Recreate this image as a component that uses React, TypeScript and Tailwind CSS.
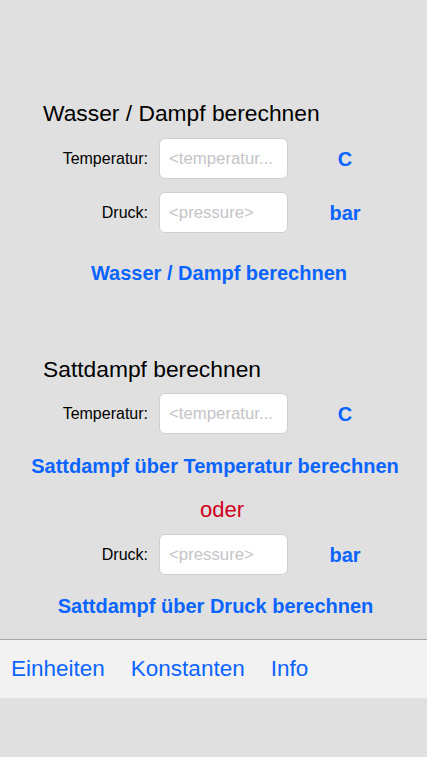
import React from "react";

const font = { fontFamily: '"Liberation Sans", Arial, sans-serif' };

const InputRow = ({
  label,
  placeholder,
  unit,
  className = "",
}: {
  label: string;
  placeholder: string;
  unit: string;
  className?: string;
}) => (
  <div className={`flex items-center ${className}`}>
    <div className="w-[148px] text-right text-[16px] text-black">{label}</div>
    <input
      readOnly
      placeholder={placeholder}
      className="ml-[11px] h-[41px] w-[129px] rounded-[6px] border border-[#cfcfd3] bg-white px-[9px] text-[16.8px] text-black outline-none placeholder:text-[#c4c4c8]"
      style={font}
    />
    <div className="w-[114px] text-center text-[20px] font-bold text-[#0a64ff]">{unit}</div>
  </div>
);

const ActionButton = ({ children, className = "" }: { children: React.ReactNode; className?: string }) => (
  <button className={`block w-full text-center text-[20px] leading-[22px] font-bold text-[#0a64ff] ${className}`}>
    {children}
  </button>
);

export default function App() {
  return (
    <div className="flex min-h-[757px] w-full flex-col bg-[#e0e0e0]" style={font}>
      <section className="flex flex-col pt-[100px]">
        <h2 className="pl-[43px] text-[22.8px] leading-[26px] text-black">Wasser / Dampf berechnen</h2>
        <InputRow className="mt-[12px]" label="Temperatur:" placeholder="<temperatur..." unit="C" />
        <InputRow className="mt-[13px]" label="Druck:" placeholder="<pressure>" unit="bar" />
        <ActionButton className="mt-[29px] pl-[11px]">Wasser / Dampf berechnen</ActionButton>
      </section>

      <section className="mt-[72px] flex flex-col">
        <h2 className="pl-[43px] text-[22.8px] leading-[26px] text-black">Sattdampf berechnen</h2>
        <InputRow className="mt-[11px]" label="Temperatur:" placeholder="<temperatur..." unit="C" />
        <ActionButton className="mt-[21px] pl-[3px]">Sattdampf über Temperatur berechnen</ActionButton>
        <div className="mt-[20px] pl-[17px] text-center text-[22px] leading-[26px] text-[#d0021b]">oder</div>
        <InputRow className="mt-[11px]" label="Druck:" placeholder="<pressure>" unit="bar" />
        <ActionButton className="mt-[20px] pl-[4px]">Sattdampf über Druck berechnen</ActionButton>
      </section>

      <nav className="mt-[22px] flex h-[59px] items-center gap-[26px] border-t border-[#a8a8a8] bg-[#f2f2f2] pl-[11px] text-[22.5px] text-[#0a64ff]">
        <span>Einheiten</span>
        <span>Konstanten</span>
        <span>Info</span>
      </nav>
    </div>
  );
}
